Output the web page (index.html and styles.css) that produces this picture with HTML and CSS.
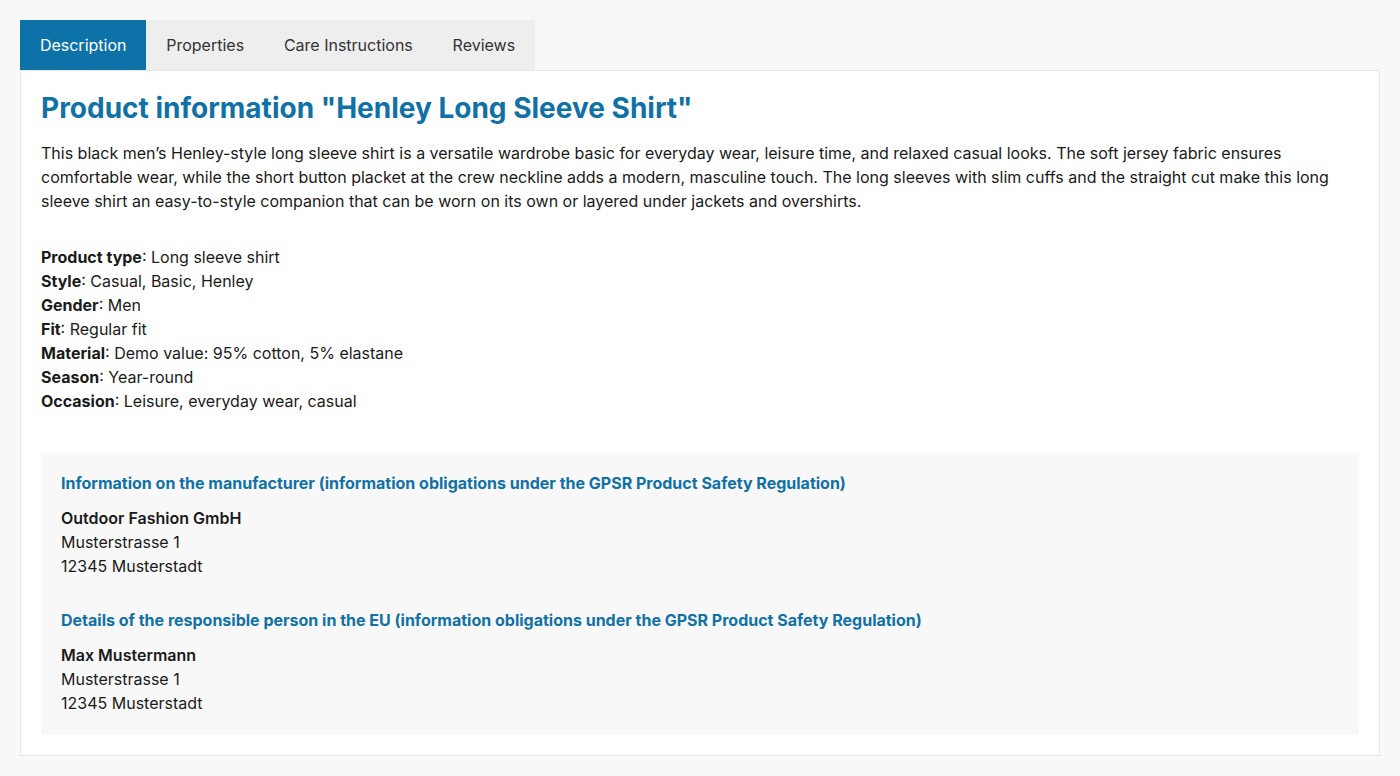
FILE: index.html
```html
<!DOCTYPE html>
<html lang="en">
<head>
<meta charset="utf-8">
<title>Product information</title>
<link rel="stylesheet" href="styles.css">
</head>
<body>
<div class="page">
  <nav class="tabs">
    <a class="tab active">Description</a>
    <a class="tab">Properties</a>
    <a class="tab">Care Instructions</a>
    <a class="tab">Reviews</a>
  </nav>
  <section class="panel">
    <h1 class="title">Product information "Henley Long Sleeve Shirt"</h1>
    <p class="desc">This black men’s Henley-style long sleeve shirt is a versatile wardrobe basic for everyday wear, leisure time, and relaxed casual looks. The soft jersey fabric ensures comfortable wear, while the short button placket at the crew neckline adds a modern, masculine touch. The long sleeves with slim cuffs and the straight cut make this long sleeve shirt an easy-to-style companion that can be worn on its own or layered under jackets and overshirts.</p>
    <ul class="specs">
      <li><b>Product type</b>: Long sleeve shirt</li>
      <li><b>Style</b>: Casual, Basic, Henley</li>
      <li><b>Gender</b>: Men</li>
      <li><b>Fit</b>: Regular fit</li>
      <li><b>Material</b>: Demo value: 95% cotton, 5% elastane</li>
      <li><b>Season</b>: Year-round</li>
      <li><b>Occasion</b>: Leisure, everyday wear, casual</li>
    </ul>
    <div class="gpsr">
      <h3 class="gpsr-title">Information on the manufacturer (information obligations under the GPSR Product Safety Regulation)</h3>
      <address class="addr"><b>Outdoor Fashion GmbH</b><br>Musterstrasse 1<br>12345 Musterstadt</address>
      <h3 class="gpsr-title">Details of the responsible person in the EU (information obligations under the GPSR Product Safety Regulation)</h3>
      <address class="addr"><b>Max Mustermann</b><br>Musterstrasse 1<br>12345 Musterstadt</address>
    </div>
  </section>
</div>
</body>
</html>
```

FILE: styles.css
```css
* { box-sizing: border-box; }
html, body { margin: 0; padding: 0; }
body {
  background: #f8f8f8;
  font-family: Inter, "Liberation Sans", sans-serif;
  color: #1a1a1a;
  font-size: 16px;
  line-height: 24px;
}
.page { padding: 20px; }
.tabs {
  display: inline-flex;
  background: #eeeeee;
  vertical-align: top;
}
.tab {
  display: block;
  padding: 13px 19.9px;
  font-size: 16px;
  line-height: 24px;
  color: #333333;
  cursor: pointer;
}
.tab.active {
  background: #0d72a8;
  color: #ffffff;
}
.panel {
  background: #ffffff;
  border: 1px solid #e6e6e6;
  padding: 20px;
}
.title {
  margin: 0;
  font-size: 28px;
  line-height: 34px;
  font-weight: 700;
  color: #1071a6;
}
.desc {
  margin: 16px 0 32px;
}
.specs {
  list-style: none;
  margin: 0 0 40px;
  padding: 0;
}
.specs b { font-weight: 700; }
.gpsr {
  background: #f8f8f8;
  padding: 20px;
}
.gpsr-title {
  margin: 0 0 13px;
  font-size: 16px;
  line-height: 20px;
  font-weight: 700;
  color: #1071a6;
}
.addr {
  font-style: normal;
  margin: 0 0 32px;
}
.addr:last-child { margin-bottom: 0; }
.addr b { font-weight: 600; }
```
